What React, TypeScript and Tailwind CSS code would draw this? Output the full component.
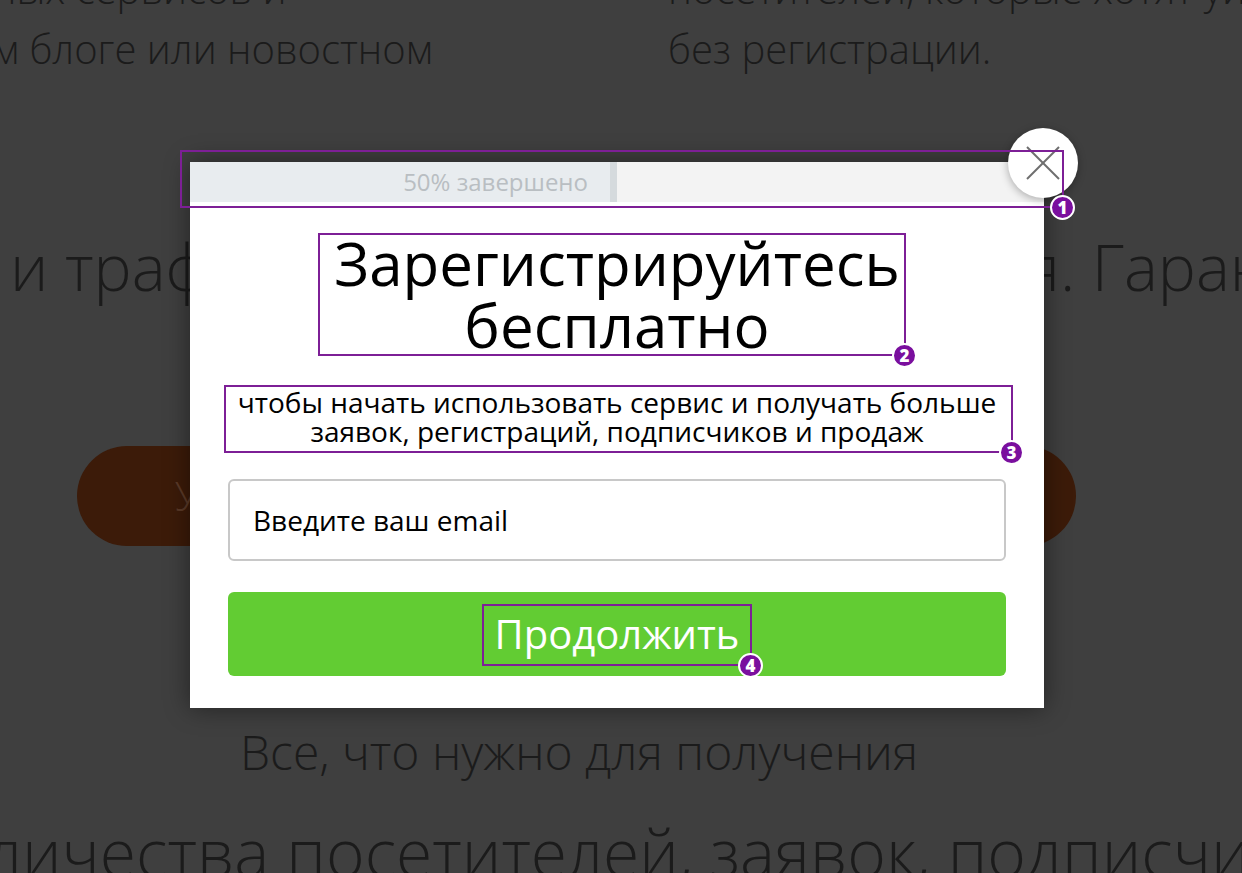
import React from "react"

const marks = [
  { n: 1, box: "left-[180px] top-[150px] w-[884px] h-[58px]" },
  { n: 2, box: "left-[318px] top-[233px] w-[588px] h-[123px]" },
  { n: 3, box: "left-[224px] top-[385px] w-[789px] h-[68px]" },
  { n: 4, box: "left-[482px] top-[604px] w-[270px] h-[62px]" },
]

export default function App() {
  return (
    <div className="relative w-[1242px] h-[873px] overflow-hidden bg-[#3f3f3f] font-['Open_Sans',sans-serif] text-[#1b1b1b]">
      {/* page behind the popup */}
      <div className="flex flex-col font-light whitespace-nowrap">
        <div className="flex mt-[-41px] text-[40px] leading-[60px]">
          <div className="w-[676px] shrink-0 ml-[-8px]">
            <div>ных сервисов и</div>
            <div>м блоге или новостном</div>
          </div>
          <div className="shrink-0">
            <div>посетителей, которые хотят уйти</div>
            <div>без регистрации.</div>
          </div>
        </div>

        <div className="flex mt-[148px] text-[64px] leading-[80px]">
          <div className="w-[1026px] shrink-0 pl-[10px]">и трафика</div>
          <div className="shrink-0">я. Гарантия</div>
        </div>

        <div className="mt-[139px] ml-[77px] w-[999px] h-[100px] shrink-0 rounded-full bg-[#3c1b09] flex items-center pl-[98px] text-[40px] text-[#5b3a28]">
          Узнать подробнее
        </div>

        <div className="mt-[176px] pl-[240px] text-[48px] leading-[60px]">Все, что нужно для получения</div>

        <div className="mt-[29px] ml-[-14px] text-[66px] leading-[80px]">личества посетителей, заявок, подписчиков</div>
      </div>

      {/* popup */}
      <div className="absolute left-[190px] top-[162px] w-[854px] h-[546px] bg-white shadow-[0_0_24px_rgba(0,0,0,0.45)] flex flex-col">
        <div className="flex h-[40px]">
          <div className="w-[420px] bg-[#e8ecef] flex items-center justify-end pr-[22px] text-[24px] text-[#b9bec2]">
            50% завершено
          </div>
          <div className="w-[7px] bg-[#d5dadd]" />
          <div className="flex-1 bg-[#f3f3f3]" />
        </div>

        <h1 className="mt-[30px] text-center text-[60px] leading-[62px] text-black">
          Зарегистрируйтесь
          <br />
          бесплатно
        </h1>

        <p className="mt-[32px] text-center text-[28px] leading-[29px] text-black">
          чтобы начать использовать сервис и получать больше
          <br />
          заявок, регистраций, подписчиков и продаж
        </p>

        <div className="mt-[33px] mx-[38px] h-[82px] border-2 border-[#c8c8c8] rounded-[6px] flex items-center pl-[23px] text-[28px] text-black">
          Введите ваш email
        </div>

        <button className="mt-[31px] mx-[38px] h-[84px] bg-[#62cc33] rounded-[6px] text-white text-[40px] leading-none">
          Продолжить
        </button>
      </div>

      {/* close button */}
      <div className="absolute left-[1008px] top-[128px] w-[70px] h-[70px] rounded-full bg-white shadow-[0_2px_8px_rgba(0,0,0,0.3)] flex items-center justify-center">
        <svg width="34" height="34" viewBox="0 0 34 34" fill="none" stroke="#6e6e6e" strokeWidth="2">
          <line x1="1" y1="1" x2="33" y2="33" />
          <line x1="33" y1="1" x2="1" y2="33" />
        </svg>
      </div>

      {/* annotation marks */}
      {marks.map((m) => (
        <div key={m.n} className={`absolute border-2 border-[#7d1f96] ${m.box}`}>
          <div className="absolute right-[-13px] bottom-[-14px] w-[25px] h-[25px] rounded-full bg-[#7a0f9e] border-2 border-white flex items-center justify-center text-white text-[17px] font-extrabold leading-none">
            {m.n}
          </div>
        </div>
      ))}
    </div>
  )
}
